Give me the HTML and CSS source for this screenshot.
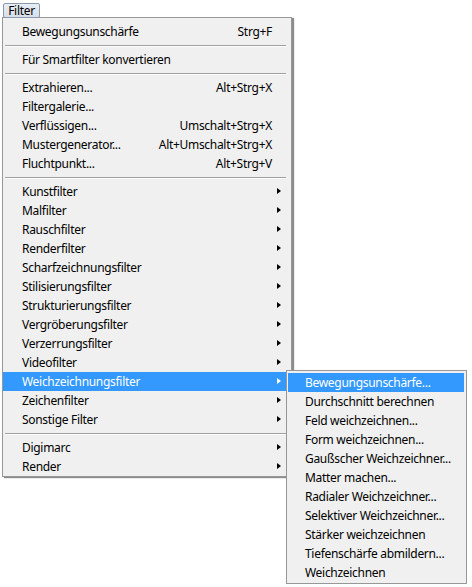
FILE: index.html
```html
<!DOCTYPE html>
<html lang="de">
<head>
<meta charset="utf-8">
<title>Filter</title>
<link rel="stylesheet" href="styles.css">
</head>
<body>
<div class="bar">
  <span class="menu-btn">Filter</span>
</div>
<div class="menu main">
  <div class="item"><span class="label">Bewegungsunschärfe</span><span class="key">Strg+F</span></div>
  <div class="sep"></div>
  <div class="item"><span class="label">Für Smartfilter konvertieren</span></div>
  <div class="sep"></div>
  <div class="item"><span class="label">Extrahieren...</span><span class="key">Alt+Strg+X</span></div>
  <div class="item"><span class="label">Filtergalerie...</span></div>
  <div class="item"><span class="label">Verflüssigen...</span><span class="key">Umschalt+Strg+X</span></div>
  <div class="item"><span class="label">Mustergenerator...</span><span class="key">Alt+Umschalt+Strg+X</span></div>
  <div class="item"><span class="label">Fluchtpunkt...</span><span class="key">Alt+Strg+V</span></div>
  <div class="sep"></div>
  <div class="item sub"><span class="label">Kunstfilter</span><span class="arrow"></span></div>
  <div class="item sub"><span class="label">Malfilter</span><span class="arrow"></span></div>
  <div class="item sub"><span class="label">Rauschfilter</span><span class="arrow"></span></div>
  <div class="item sub"><span class="label">Renderfilter</span><span class="arrow"></span></div>
  <div class="item sub"><span class="label">Scharfzeichnungsfilter</span><span class="arrow"></span></div>
  <div class="item sub"><span class="label">Stilisierungsfilter</span><span class="arrow"></span></div>
  <div class="item sub"><span class="label">Strukturierungsfilter</span><span class="arrow"></span></div>
  <div class="item sub"><span class="label">Vergröberungsfilter</span><span class="arrow"></span></div>
  <div class="item sub"><span class="label">Verzerrungsfilter</span><span class="arrow"></span></div>
  <div class="item sub"><span class="label">Videofilter</span><span class="arrow"></span></div>
  <div class="item sub active"><span class="label">Weichzeichnungsfilter</span><span class="arrow"></span></div>
  <div class="item sub"><span class="label">Zeichenfilter</span><span class="arrow"></span></div>
  <div class="item sub"><span class="label">Sonstige Filter</span><span class="arrow"></span></div>
  <div class="sep"></div>
  <div class="item sub"><span class="label">Digimarc</span><span class="arrow"></span></div>
  <div class="item sub"><span class="label">Render</span><span class="arrow"></span></div>
</div>
<div class="menu submenu">
  <div class="item active"><span class="label">Bewegungsunschärfe...</span></div>
  <div class="item"><span class="label">Durchschnitt berechnen</span></div>
  <div class="item"><span class="label">Feld weichzeichnen...</span></div>
  <div class="item"><span class="label">Form weichzeichnen...</span></div>
  <div class="item"><span class="label">Gaußscher Weichzeichner...</span></div>
  <div class="item"><span class="label">Matter machen...</span></div>
  <div class="item"><span class="label">Radialer Weichzeichner...</span></div>
  <div class="item"><span class="label">Selektiver Weichzeichner...</span></div>
  <div class="item"><span class="label">Stärker weichzeichnen</span></div>
  <div class="item"><span class="label">Tiefenschärfe abmildern...</span></div>
  <div class="item"><span class="label">Weichzeichnen</span></div>
</div>
</body>
</html>
```
FILE: styles.css
```css
html, body {
  margin: 0;
  padding: 0;
  background: #ffffff;
}
body {
  font-family: "Noto Sans", "DejaVu Sans", sans-serif;
  font-size: 12px;
  letter-spacing: -0.3px;
  color: #000;
  position: relative;
  width: 472px;
  height: 587px;
  overflow: hidden;
}
.bar {
  height: 17px;
  padding: 2px 0 0 3px;
  box-sizing: border-box;
}
.menu-btn {
  display: inline-block;
  box-sizing: border-box;
  height: 15px;
  width: 37px;
  line-height: 13px;
  text-align: center;
  border: 1px solid #8a99ad;
  border-radius: 2px;
  background: linear-gradient(#e8eef5, #d6dee8);
}
.menu {
  background: #f0f0f0;
  border: 1px solid #979797;
  box-sizing: border-box;
}
.main {
  margin-left: 2px;
  width: 290px;
  height: 460px;
  padding: 4px 5px 2px 0;
  box-shadow: 2px 1px 1px 0 rgba(0,0,0,0.45);
}
.item {
  position: relative;
  display: flex;
  height: 19px;
  line-height: 19px;
  padding-left: 19px;
  padding-right: 14px;
  white-space: nowrap;
}
.item .label {
  flex: 1;
}
.item .key {
  text-align: right;
}
.item.active {
  background: #3399ff;
  color: #ffffff;
}
.arrow {
  position: absolute;
  right: 5px;
  top: 6px;
  width: 0;
  height: 0;
  border-top: 3.5px solid transparent;
  border-bottom: 3.5px solid transparent;
  border-left: 4px solid #000;
}
.item.active .arrow {
  border-left-color: #ffffff;
}
.sep {
  height: 0;
  margin: 4px 0 3px 2px;
  border-top: 1px solid #a0a0a0;
  border-bottom: 1px solid #ffffff;
}
.submenu {
  position: absolute;
  left: 286px;
  top: 370px;
  width: 181px;
  height: 214px;
  padding: 2px 2px 0 1px;
}
.submenu .item {
  padding-left: 17px;
}
```
